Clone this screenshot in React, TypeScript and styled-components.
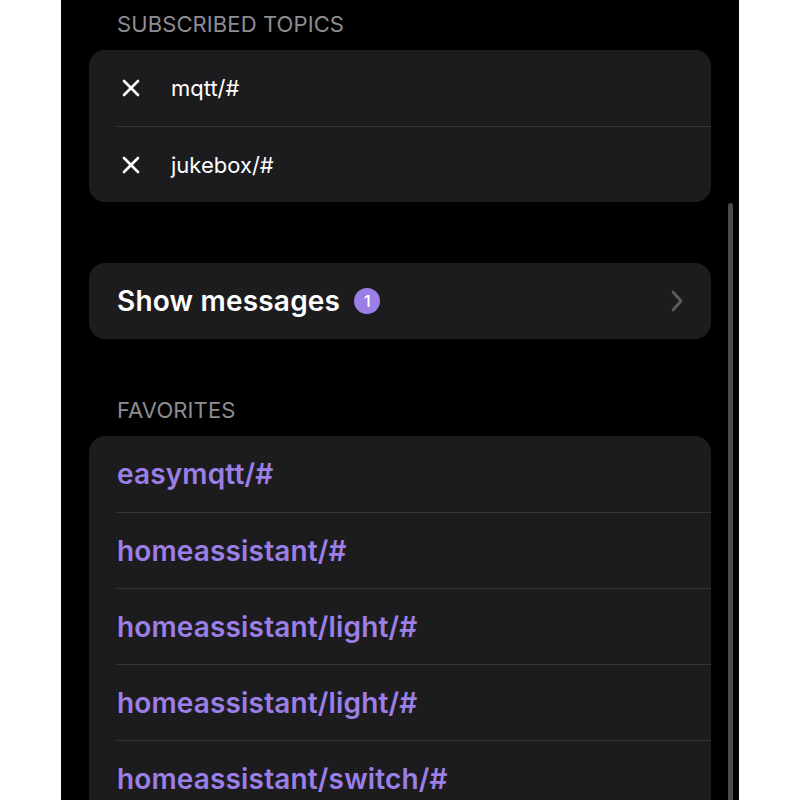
import React from "react";
import styled, { createGlobalStyle } from "styled-components";

const Global = createGlobalStyle`
  html, body { margin: 0; padding: 0; background: #ffffff; }
  body { font-family: Inter, "Noto Sans", "Liberation Sans", sans-serif; -webkit-font-smoothing: antialiased; }
`;

const Page = styled.div`
  width: 800px;
  height: 800px;
  display: flex;
  justify-content: center;
  background: #ffffff;
`;

const Panel = styled.div`
  position: relative;
  width: 678px;
  height: 800px;
  background: #000000;
  overflow: hidden;
  padding: 0 28px;
  box-sizing: border-box;
  display: flex;
  flex-direction: column;
`;

const Scrollbar = styled.div`
  position: absolute;
  right: 6px;
  top: 203px;
  bottom: -10px;
  width: 5px;
  border-radius: 3px;
  background: #4a4a4c;
`;

const SectionHeader = styled.div<{ $top: number }>`
  margin-top: ${(p) => p.$top}px;
  padding-left: 28px;
  font-size: 22px;
  line-height: 26px;
  color: #8d8d93;
  text-transform: uppercase;
  letter-spacing: 0.1px;
  margin-bottom: 13px;
`;

const Card = styled.div<{ $top?: number }>`
  margin-top: ${(p) => p.$top ?? 0}px;
  background: #1c1c1e;
  border-radius: 16px;
  display: flex;
  flex-direction: column;
  flex-shrink: 0;
`;

const Row = styled.div`
  height: 76px;
  display: flex;
  align-items: center;
  margin-left: 28px;
  box-sizing: border-box;
  & + & {
    border-top: 1px solid #38383a;
  }
`;

const TopicText = styled.span`
  margin-left: 31px;
  font-size: 22px;
  color: #ffffff;
`;

const CloseIcon = styled.svg`
  margin-left: 5px;
  width: 18px;
  height: 18px;
  flex-shrink: 0;
`;

const NavRow = styled.div`
  height: 76px;
  display: flex;
  align-items: center;
  padding: 0 27px 0 28px;
`;

const NavTitle = styled.span`
  font-size: 28px;
  font-weight: 600;
  letter-spacing: 0.2px;
  color: #ffffff;
`;

const Badge = styled.span`
  margin-left: 14px;
  width: 26px;
  height: 26px;
  border-radius: 50%;
  background: #9b7fe6;
  color: #ffffff;
  font-size: 16px;
  font-weight: 500;
  display: flex;
  align-items: center;
  justify-content: center;
`;

const Spacer = styled.div`
  flex: 1;
`;

const FavText = styled.span`
  font-size: 28px;
  font-weight: 600;
  letter-spacing: 0.15px;
  color: #9b7fe6;
`;

const Close = () => (
  <CloseIcon viewBox="0 0 18 18">
    <path d="M2 2 L16 16 M16 2 L2 16" stroke="#ffffff" strokeWidth="2.6" strokeLinecap="round" />
  </CloseIcon>
);

const Chevron = () => (
  <svg width="14" height="22" viewBox="0 0 14 22">
    <path d="M3 2 L11 11 L3 20" stroke="#5c5c60" strokeWidth="2.8" fill="none" strokeLinecap="round" strokeLinejoin="round" />
  </svg>
);

const topics = ["mqtt/#", "jukebox/#"];
const favorites = [
  "easymqtt/#",
  "homeassistant/#",
  "homeassistant/light/#",
  "homeassistant/light/#",
  "homeassistant/switch/#",
];

export default function App() {
  return (
    <Page>
      <Global />
      <Panel>
        <SectionHeader $top={11}>Subscribed Topics</SectionHeader>
        <Card>
          {topics.map((t) => (
            <Row key={t}>
              <Close />
              <TopicText>{t}</TopicText>
            </Row>
          ))}
        </Card>
        <Card $top={61}>
          <NavRow>
            <NavTitle>Show messages</NavTitle>
            <Badge>1</Badge>
            <Spacer />
            <Chevron />
          </NavRow>
        </Card>
        <SectionHeader $top={58}>Favorites</SectionHeader>
        <Card>
          {favorites.map((f, i) => (
            <Row key={i}>
              <FavText>{f}</FavText>
            </Row>
          ))}
        </Card>
        <Scrollbar />
      </Panel>
    </Page>
  );
}
